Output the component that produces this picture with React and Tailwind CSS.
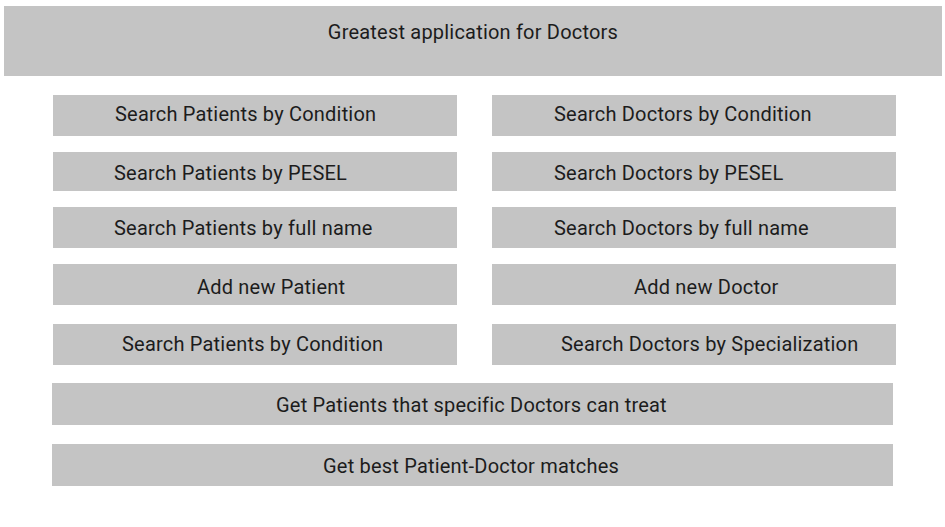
import React from "react";

const left = [
  { t: "Search Patients by Condition", pl: "pl-[62px] pb-[2px]", h: "h-[41px]", mt: "" },
  { t: "Search Patients by PESEL", pl: "pl-[61px] pt-[4px]", h: "h-[39px]", mt: "mt-[16px]" },
  { t: "Search Patients by full name", pl: "pl-[61px] pt-[2px]", h: "h-[41px]", mt: "mt-[16px]" },
  { t: "Add new Patient", pl: "pl-[144px] pt-[5px]", h: "h-[41px]", mt: "mt-[16px]" },
  { t: "Search Patients by Condition", pl: "pl-[69px]", h: "h-[41px]", mt: "mt-[19px]" },
];
const right = [
  { t: "Search Doctors by Condition", pl: "pl-[62px] pb-[2px]", h: "h-[41px]", mt: "" },
  { t: "Search Doctors by PESEL", pl: "pl-[62px] pt-[4px]", h: "h-[39px]", mt: "mt-[16px]" },
  { t: "Search Doctors by full name", pl: "pl-[62px] pt-[2px]", h: "h-[41px]", mt: "mt-[16px]" },
  { t: "Add new Doctor", pl: "pl-[142px] pt-[6px]", h: "h-[41px]", mt: "mt-[16px]" },
  { t: "Search Doctors by Specialization", pl: "pl-[69px]", h: "h-[41px]", mt: "mt-[19px]" },
];

function Btn({ t, pl, h, mt }) {
  return (
    <div className={`flex w-[404px] items-center bg-[#c4c4c4] ${pl} ${h} ${mt}`}>
      <span>{t}</span>
    </div>
  );
}

export default function App() {
  return (
    <div
      className="min-h-[527px] w-[945px] bg-white text-[20px] leading-[23px] tracking-[0.2px] text-[#1c1c1c]"
      style={{ fontFamily: "Roboto, 'Liberation Sans', sans-serif" }}
    >
      <div className="px-[4px] pt-[6px]">
        <div className="flex h-[70px] w-[938px] justify-center bg-[#c4c4c4] pt-[15px]">
          <span>Greatest application for Doctors</span>
        </div>
      </div>
      <div className="ml-[53px] mt-[19px] flex gap-[35px]">
        <div className="flex flex-col">
          {left.map((b, i) => (
            <Btn key={i} {...b} />
          ))}
        </div>
        <div className="flex flex-col">
          {right.map((b, i) => (
            <Btn key={i} {...b} />
          ))}
        </div>
      </div>
      <div className="ml-[52px] mt-[18px] flex flex-col gap-[19px]">
        <div className="flex h-[42px] w-[841px] items-center bg-[#c4c4c4] pl-[224px] pt-[2px]">
          <span>Get Patients that specific Doctors can treat</span>
        </div>
        <div className="flex h-[42px] w-[841px] items-center bg-[#c4c4c4] pl-[271px] pt-[2px]">
          <span>Get best Patient-Doctor matches</span>
        </div>
      </div>
    </div>
  );
}
